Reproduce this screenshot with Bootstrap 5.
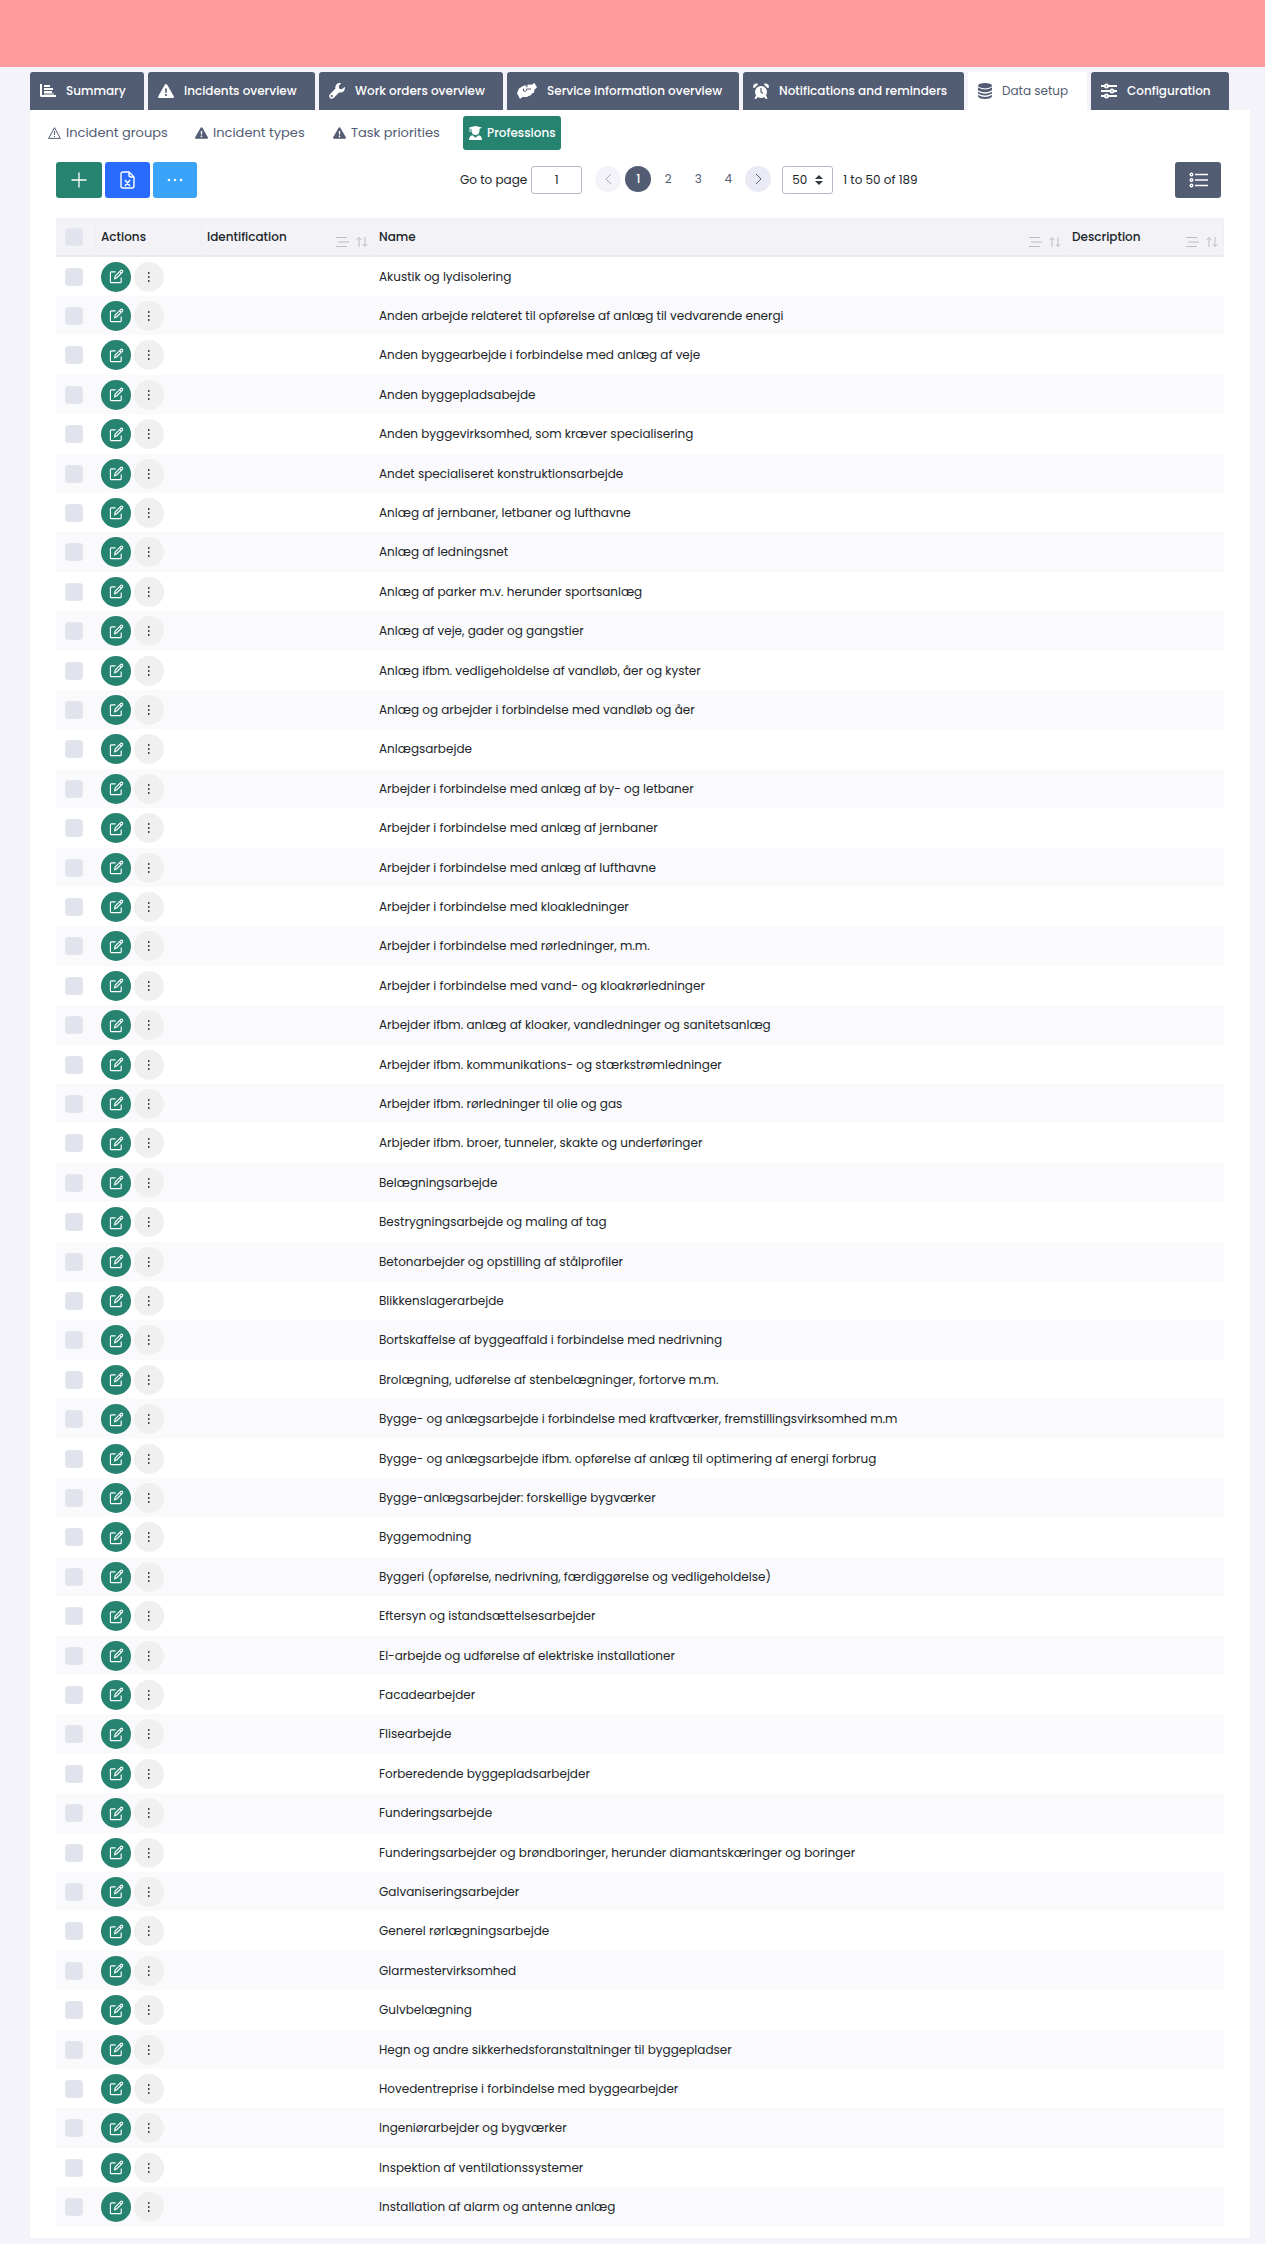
<!DOCTYPE html>
<html lang="en">
<head>
<meta charset="utf-8">
<meta name="viewport" content="width=device-width, initial-scale=1">
<title>Professions</title>
<link href="https://cdn.jsdelivr.net/npm/bootstrap@5.3.0/dist/css/bootstrap.min.css" rel="stylesheet">
<style>
:root{--slate:#525c72;--green:#26836f;--ink:#212529}
body{background:#f3f3f9;color:var(--ink);font-family:Poppins,Inter,"Open Sans",sans-serif;font-size:12px;line-height:18px}
svg{display:block;flex:none;fill:none;stroke:currentColor}
.solid{fill:currentColor;stroke:none}
.alert-strip{height:67px;background:#ff9b9b}
.shell{padding:5px 15px 7px 30px}
.main-tabs{gap:4px}
.main-tabs .nav-link{display:flex;align-items:center;gap:10px;height:38px;padding:0 10px;border-radius:3px 3px 0 0;background:var(--slate);color:#fff;font-weight:500;font-size:12px;white-space:nowrap}
.main-tabs .nav-link.active{background:#fff;color:var(--slate);font-weight:400}
.w-a{width:114px}.w-b{width:167px}.w-c{width:184px}.w-d{width:232px}.w-e{width:221px}.w-f{width:119px}.w-g{width:138px}
.panel{background:#fff;padding:6px 26px 11px}
.sub-tabs{margin-left:-14px;gap:18px}
.sub-tabs .nav-link{display:flex;align-items:center;gap:5px;height:34px;padding:0 6px;border-radius:3px;color:var(--slate);font-size:13px;white-space:nowrap}
.sub-tabs .nav-link.active{background:var(--green);color:#fff;font-weight:500;font-size:12px}
.s-a{width:129px}.s-b{width:120px}.s-c{width:118px}.s-d{width:98px}
.toolbar{padding:12px 3px 20px 0}
.tool-left{width:404px;gap:3px}
.tool{display:flex;align-items:center;justify-content:center;width:46px;height:36px;padding:0;border:0;border-radius:3px;color:#fff}
.tool-add{background:var(--green)}.tool-xls{width:45px;background:#2a6bff}.tool-more{width:44px;background:#38a3f8}.tool-list{background:var(--slate)}
.field{height:28px;width:51px;border:1px solid #b3b9c6;border-radius:3px;background-color:#fff;color:var(--ink);font-size:12px}
.pick{appearance:none;padding:0 0 0 9px;margin-right:10px;background:url("data:image/svg+xml,%3Csvg xmlns='http://www.w3.org/2000/svg' width='8' height='10'%3E%3Cpath fill='%23343a40' d='M4 0l4 4H0zM4 10l4-4H0z'/%3E%3C/svg%3E") no-repeat right 9px center}
.pager{gap:4px;margin:0 11px 2px 13px}
.pager .page-item .page-link{display:flex;align-items:center;justify-content:center;width:26px;height:26px;margin:0;padding:0;border:0;border-radius:50%;color:var(--slate);background:none;font-size:12px}
.pager .page-item.active .page-link{background:var(--slate);color:#fff;font-weight:500}
.pager .page-item .step{background:#eaeaf4}
.pager .page-item.disabled .page-link{background:#f3f3f9;color:#a5a9b8}
.grid-table{table-layout:fixed;width:100%;margin:0;border-collapse:separate;border-spacing:0}
.grid-table th{height:39px;padding:0 5px;background:#f2f2f7;border-top:1px solid #eeeef4;border-bottom:2px solid #eaeaf4;border-right:1px solid #eeeef4;font-weight:500;font-size:12px;vertical-align:middle}
.grid-table td{height:39px;padding:0 5px;vertical-align:middle;line-height:18px}
.grid-table tr:nth-child(5n+3) td,.grid-table tr:nth-child(5n) td{height:40px}
.grid-table tbody tr:nth-child(even){background:#fafafc}
.c-check{width:40px}.c-act{width:106px}.c-id{width:172px}.c-desc{width:157px}
.tick{appearance:none;display:block;width:18px;height:18px;margin:0 0 0 4px;border:1px solid #e4e8ee;border-radius:3px;background:#e1e4ec}
.round{display:flex;align-items:center;justify-content:center;width:30px;height:30px;padding:0;border:0;border-radius:50%}
.edit{background:var(--green);color:#fff}.more{background:#f0f0f0;color:#444}
.acts{gap:3px}
.sorters{gap:7px;height:18px;color:#bcbec6;padding-top:8px}
</style>
</head>
<body>
<svg width="0" height="0" class="position-absolute" aria-hidden="true">
<symbol id="warn" viewBox="0 0 16 14"><path fill="currentColor" stroke="none" fill-rule="evenodd" d="M8 0q.8 0 1.2.7l6.6 11.5Q16.4 14 14.8 14H1.2Q-.4 14 .2 12.200L6.800.7Q7.200 0 8 0zM7 4.500l.4 4.500h1.200L9 4.500zM8 10a1 1 0 1 0 .01 0z"/></symbol>
<symbol id="edit" viewBox="0 0 16 16"><path d="M7 3H2.500Q1.500 3 1.500 4v9.500q0 1 1 1H12q1 0 1-1V9M6 10.500l.6-2.900 6-6.100q1-.6 1.700.1t.1 1.700l-6 6zM11.500 2.800l1.800 1.800" stroke-width="1.200"/></symbol>
<symbol id="dots" viewBox="0 0 4 12"><path fill="currentColor" stroke="none" d="M1 1h1.500v2H1zM1 5h1.500v2H1zM1 9h1.500v2H1z"/></symbol>
<symbol id="lines" viewBox="0 0 14 12"><path d="M1 1.500h11M3 6h11M1 10.500h11"/></symbol>
<symbol id="sort" viewBox="0 0 12 12"><path d="M3 11V1.500M.7 4L3 1.500 5.300 4M9 1v9.500M6.700 8L9 10.500 11.300 8"/></symbol>
</svg>
<header class="alert-strip"></header>
<main class="shell">
<nav class="nav main-tabs flex-nowrap">
<a class="nav-link w-a" href="#"><svg class="solid" width="16" height="14" viewBox="0 0 16 14"><path d="M0 0h2v11h14v2H1.500Q0 13 0 11.500zM4 1h6v2H4zM4 4h9v2H4zM4 7h8v2H4zM4 9.500h10v1H4z"/></svg>Summary</a>
<a class="nav-link w-b" href="#"><svg width="16" height="14"><use href="#warn"/></svg>Incidents overview</a>
<a class="nav-link w-c" href="#"><svg class="solid" width="16" height="16" viewBox="0 0 16 16"><path fill-rule="evenodd" d="M15.700 3.700L13 6.300l-2.700-.6L9.700 3 12.300.3Q9.500-.6 7.600 1.300 5.800 3.200 6.500 5.600L.7 11.400q-1.200 1.800.3 3.500 1.800 1.600 3.600.2l5.800-5.800q2.300.8 4.300-1.100 1.700-1.900 1-4.500zM2.800 12a1 1 0 1 1-.01 0z"/></svg>Work orders overview</a>
<a class="nav-link w-d" href="#"><svg class="solid" width="20" height="16" viewBox="0 0 20 16"><path d="M0 10l2-4.500L7 2.500l2 .3L11.500 1.500l3 .3L17.500 0 20 4.500l-2.500 2-.5 3-2 1-1.500 2-2 .5-1.500 1H5.500L3 16z"/><path d="M6.500 5.500V8q2 1 3-.5V6h4.500M9 4l2-1.200" fill="none" stroke="#525c72"/></svg>Service information overview</a>
<a class="nav-link w-e" href="#"><svg class="solid" width="16" height="16" viewBox="0 0 16 16"><circle cx="8" cy="9" r="6"/><path d="M0 4.500Q0 0 4.500.5L5 1.500 1.500 5zM16 4.500Q16 0 11.500.5L11 1.500 14.500 5zM3 12l2 2-2 2H1.500zM13 12l-2 2 2 2h1.500z"/><path d="M8 5v4l2 1.500" fill="none" stroke="#525c72" stroke-width="1.200"/></svg>Notifications and reminders</a>
<a class="nav-link active w-f" href="#"><svg class="solid" width="14" height="16" viewBox="0 0 14 16"><ellipse cx="7" cy="2.700" rx="7" ry="2.700"/><path d="M0 4.500q7 4 14 0v2.700q-7 4-14 0zM0 8.800q7 4 14 0v1.700q-7 4-14 0zM0 12q7 4 14 0v1.500q-1.500 2.500-7 2.500t-7-2.500z"/></svg>Data setup</a>
<a class="nav-link w-g" href="#"><svg width="16" height="16" viewBox="0 0 16 16" stroke-width="1.800"><path d="M0 3h4M7 3h9M0 8h9M13 8h3M0 13h4M7 13h9"/><circle cx="5.500" cy="3" r="1.600"/><circle cx="11" cy="8" r="1.600"/><circle cx="5.500" cy="13" r="1.600"/></svg>Configuration</a>
</nav>
<section class="panel">
<nav class="nav sub-tabs flex-nowrap">
<a class="nav-link s-a" href="#"><svg width="13" height="12" viewBox="0 0 13 12"><path d="M6.500.7l5.900 10.700H.6zM6.500 4v4M6.500 9v1"/></svg>Incident groups</a>
<a class="nav-link s-b" href="#"><svg width="13" height="12"><use href="#warn"/></svg>Incident types</a>
<a class="nav-link s-c" href="#"><svg width="13" height="12"><use href="#warn"/></svg>Task priorities</a>
<a class="nav-link active s-d" href="#"><svg class="solid" width="13" height="14" viewBox="0 0 13 14"><path d="M0 1.500L6.500 0 13 1.500 10.500 3v2q-.5 4-4 4t-4-4V3l-1-.4V6H.5V2zM0 14q0-4 3.500-4.800l3 2.500 3-2.500Q13 10 13 14z"/></svg>Professions</a>
</nav>
<div class="toolbar d-flex align-items-center">
<div class="tool-left d-flex">
<button class="tool tool-add" aria-label="Add"><svg width="16" height="16" viewBox="0 0 16 16"><path d="M8 .5v15M.5 8h15" stroke-width="1.300"/></svg></button>
<button class="tool tool-xls" aria-label="Export to Excel"><svg width="15" height="18" viewBox="0 0 15 18" stroke-width="1.400"><path d="M9 1H3Q1 1 1 3v12q0 2 2 2h9q2 0 2-2V6zM9 1v3q0 2 2 2h3M5 9l5 6M10 9l-5 6"/></svg></button>
<button class="tool tool-more" aria-label="More"><svg class="solid" width="16" height="4" viewBox="0 0 16 4"><circle cx="2" cy="2" r="1.300"/><circle cx="8" cy="2" r="1.300"/><circle cx="14" cy="2" r="1.300"/></svg></button>
</div>
<label for="page" class="me-1">Go to page</label>
<input id="page" class="field text-center" type="text" value="1">
<ul class="pagination pager">
<li class="page-item disabled"><a class="page-link" href="#" aria-label="Previous"><svg width="7" height="12" viewBox="0 0 7 12"><path d="M6 1L1 6l5 5"/></svg></a></li>
<li class="page-item active"><a class="page-link" href="#">1</a></li>
<li class="page-item"><a class="page-link" href="#">2</a></li>
<li class="page-item"><a class="page-link" href="#">3</a></li>
<li class="page-item"><a class="page-link" href="#">4</a></li>
<li class="page-item"><a class="page-link step" href="#" aria-label="Next"><svg width="7" height="12" viewBox="0 0 7 12"><path d="M1 1l5 5-5 5"/></svg></a></li>
</ul>
<select class="field pick" aria-label="Rows per page"><option>50</option><option>100</option></select>
<span>1 to 50 of 189</span>
<button class="tool tool-list ms-auto" aria-label="Columns"><svg width="19" height="16" viewBox="0 0 19 16" stroke-width="1.400"><path d="M6 2.500h13M6 8h13M6 13.500h13"/><circle cx="2.500" cy="2.500" r="1.300"/><circle cx="2.500" cy="8" r="1.300"/><circle cx="2.500" cy="13.500" r="1.300"/></svg></button>
</div>
<table class="grid-table">
<thead><tr>
<th class="c-check"><input class="tick" type="checkbox" aria-label="Select all"></th>
<th class="c-act">Actions</th>
<th class="c-id"><div class="d-flex justify-content-between">Identification<span class="sorters d-flex"><svg width="14" height="12"><use href="#lines"/></svg><svg width="12" height="12"><use href="#sort"/></svg></span></div></th>
<th><div class="d-flex justify-content-between">Name<span class="sorters d-flex"><svg width="14" height="12"><use href="#lines"/></svg><svg width="12" height="12"><use href="#sort"/></svg></span></div></th>
<th class="c-desc"><div class="d-flex justify-content-between">Description<span class="sorters d-flex"><svg width="14" height="12"><use href="#lines"/></svg><svg width="12" height="12"><use href="#sort"/></svg></span></div></th>
</tr></thead>
<tbody id="rows"></tbody>
</table>
</section>
</main>
<script src="https://cdn.jsdelivr.net/npm/bootstrap@5.3.0/dist/js/bootstrap.bundle.min.js"></script>
<script>
const names = `Akustik og lydisolering
Anden arbejde relateret til opførelse af anlæg til vedvarende energi
Anden byggearbejde i forbindelse med anlæg af veje
Anden byggepladsabejde
Anden byggevirksomhed, som kræver specialisering
Andet specialiseret konstruktionsarbejde
Anlæg af jernbaner, letbaner og lufthavne
Anlæg af ledningsnet
Anlæg af parker m.v. herunder sportsanlæg
Anlæg af veje, gader og gangstier
Anlæg ifbm. vedligeholdelse af vandløb, åer og kyster
Anlæg og arbejder i forbindelse med vandløb og åer
Anlægsarbejde
Arbejder i forbindelse med anlæg af by- og letbaner
Arbejder i forbindelse med anlæg af jernbaner
Arbejder i forbindelse med anlæg af lufthavne
Arbejder i forbindelse med kloakledninger
Arbejder i forbindelse med rørledninger, m.m.
Arbejder i forbindelse med vand- og kloakrørledninger
Arbejder ifbm. anlæg af kloaker, vandledninger og sanitetsanlæg
Arbejder ifbm. kommunikations- og stærkstrømledninger
Arbejder ifbm. rørledninger til olie og gas
Arbjeder ifbm. broer, tunneler, skakte og underføringer
Belægningsarbejde
Bestrygningsarbejde og maling af tag
Betonarbejder og opstilling af stålprofiler
Blikkenslagerarbejde
Bortskaffelse af byggeaffald i forbindelse med nedrivning
Brolægning, udførelse af stenbelægninger, fortorve m.m.
Bygge- og anlægsarbejde i forbindelse med kraftværker, fremstillingsvirksomhed m.m
Bygge- og anlægsarbejde ifbm. opførelse af anlæg til optimering af energi forbrug
Bygge-anlægsarbejder: forskellige bygværker
Byggemodning
Byggeri (opførelse, nedrivning, færdiggørelse og vedligeholdelse)
Eftersyn og istandsættelsesarbejder
El-arbejde og udførelse af elektriske installationer
Facadearbejder
Flisearbejde
Forberedende byggepladsarbejder
Funderingsarbejde
Funderingsarbejder og brøndboringer, herunder diamantskæringer og boringer
Galvaniseringsarbejder
Generel rørlægningsarbejde
Glarmestervirksomhed
Gulvbelægning
Hegn og andre sikkerhedsforanstaltninger til byggepladser
Hovedentreprise i forbindelse med byggearbejder
Ingeniørarbejder og bygværker
Inspektion af ventilationssystemer
Installation af alarm og antenne anlæg`.split("\n");
document.getElementById("rows").innerHTML = names.map(n => `<tr>
<td><input class="tick" type="checkbox" aria-label="Select ${n}"></td>
<td><div class="acts d-flex"><button class="round edit" aria-label="Edit ${n}"><svg width="15" height="15"><use href="#edit"/></svg></button><button class="round more" aria-label="More actions"><svg width="4" height="12"><use href="#dots"/></svg></button></div></td>
<td></td><td>${n}</td><td></td></tr>`).join("");
</script>
</body>
</html>
